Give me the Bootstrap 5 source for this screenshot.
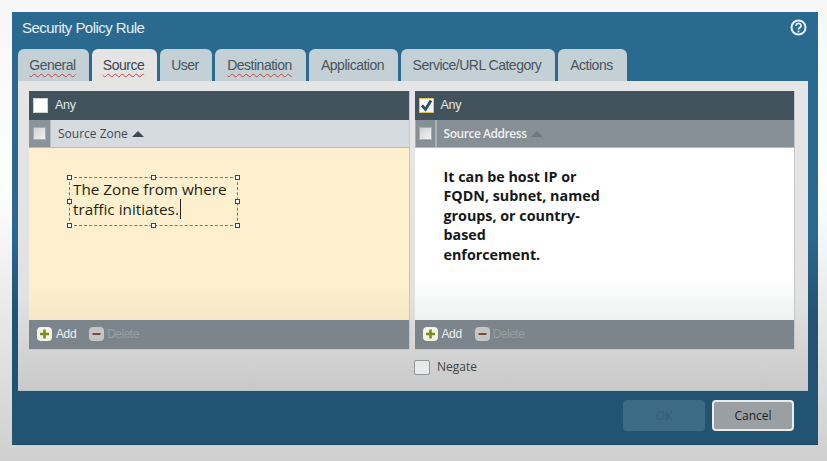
<!DOCTYPE html>
<html lang="en">
<head>
    <meta charset="UTF-8">
    <meta name="viewport" content="width=device-width, initial-scale=1.0">
    <title>Security Policy Rule</title>
    <link rel="stylesheet" href="https://cdn.jsdelivr.net/npm/bootstrap@5.3.0/dist/css/bootstrap.min.css">
    <style>
        html, body { height: 461px; overflow: hidden; }
        body { background: linear-gradient(#f6f6f6, #fff 40%, #cfcfcf 100%); padding: 12px 9px 16px 12px; font-family: "Liberation Sans", sans-serif; }
        .rule-dialog { height: 433px; background: linear-gradient(#2b6a90, #2a6a8f 50%, #235372 70%, #235372); padding: 0 10px 0 6px; border-bottom: 1px solid #1c4a66; }
        .rule-title { height: 37px; color: #e6eff4; font-size: 15px; letter-spacing: -.55px; padding: 0 0 4px 4px; }
        .help-icon { margin-right: 1px; margin-top: -3px; }
        .rule-tabs { height: 32px; gap: 3px; padding-left: 0; }
        .rule-tab { background: #c3d1d6; color: #4a5358; font-size: 14px; letter-spacing: -.5px; border-radius: 6px 6px 0 0; height: 32px; line-height: 32px; text-align: center; padding-right: 2px; }
        .rule-tab.active-tab { background: #e4e4e4; color: #3d464c; }
        .squiggle { text-decoration: underline wavy #c8453f 1px; text-underline-offset: 3px; }
        .rule-body { height: 310px; background: linear-gradient(#e5e5e5, #e2e2e2 70%, #c9c9c9); padding: 10px 13px 0 11px; border-bottom: 1px solid #b9c3c8; }
        .rule-cols { gap: 5px; }
        .rule-col { width: 380.5px; border: 1px solid #c4c8ca; border-width: 0 1px 1px 0; }
        .any-bar { height: 29px; background: #42525c; color: #e4e8ea; font-size: 12.5px; letter-spacing: -.3px; padding-left: 4px; gap: 7px; }
        .any-box { width: 15px; height: 15px; background: #fff; border: 1px solid #cdd2d5; }
        .any-box.checked { border-color: #e5bf5a; border-width: 1.5px; background: #f4f6f8; }
        .head-bar { height: 28px; border-bottom: 1px solid #b5bcc0; font-family: "Open Sans", sans-serif; font-size: 12px; }
        .head-bar.pale { background: #d6dbdf; color: #3e4a52; }
        .head-bar.dim { background: #858f95; color: #eef1f2; font-weight: 600; letter-spacing: -.45px; }
        .head-check { width: 22px; height: 100%; background: #8b9499; border-right: 1px solid #b5bcc0; margin-right: 7px; }
        .head-bar.dim .head-check { width: 22px; background: #858f95; border-left: 1px solid #a9b1b5; border-right: 2px solid #a9b1b5; }
        .head-box { width: 13px; height: 13px; background: linear-gradient(135deg, #cfd2d4, #f2f2f2); border: 1px solid #a7adb1; }
        .sort-up { width: 0; height: 0; border: 6px solid transparent; border-top: 0; border-bottom: 6px solid #3e4a52; margin-left: 4px; }
        .head-bar.dim .sort-up { border-bottom-color: #6e787e; }
        .list-pane { height: 172px; position: relative; }
        .list-pane.yellow { background: linear-gradient(#fef0cf, #fef0cf 80%, #f6e8c5); }
        .list-pane.white { background: linear-gradient(#fff, #fff 75%, #eff1f1); padding: 18.5px 0 0 29px; }
        .address-note { width: 170px; font-family: "Open Sans", sans-serif; font-weight: 700; font-size: 14.3px; line-height: 19.6px; color: #16181a; }
        .zone-note { position: absolute; left: 40px; top: 29px; width: 169px; height: 49px; border: 1px dashed #3c8aa6; font-family: "Open Sans", sans-serif; font-size: 15.3px; line-height: 20px; color: #241f14; padding: 1px 0 0 3px; white-space: nowrap; }
        .zone-note .caret-bar { border-right: 1.5px solid #222; padding-right: 1px; }
        .grip { position: absolute; width: 5px; height: 5px; background: #fff; border: 1px solid #444; }
        .foot-bar { height: 29px; background: #7b858b; padding: 0 0 1px 8px; font-size: 12px; letter-spacing: -.4px; color: #eef1f2; }
        .foot-btn { width: 15px; height: 14px; border-radius: 4px; margin-right: 4px; }
        .foot-btn.add { background: #f2f4e6; }
        .foot-btn.del { background: #c4c6c6; margin-left: 13px; margin-right: 3px; }
        .foot-off { color: #959da2; letter-spacing: -.5px; }
        .negate-row { margin: 8px 0 0 385px; font-family: "Open Sans", sans-serif; font-size: 12px; color: #40454a; gap: 7px; }
        .negate-box { width: 16px; height: 15px; background: #e9e9e9; border: 1px solid #8f979c; border-radius: 2px; }
        .rule-actions { height: 55px; padding: 9px 14px 0 0; gap: 7px; }
        .rule-btn { width: 82px; height: 31px; border-radius: 4px; font-family: "Open Sans", sans-serif; font-size: 12px; padding: 0; }
        .rule-btn.off { background: #4a7892; color: #3b6780; border: 0; }
        .rule-btn.on { background: #9a9fa4; color: #1c2024; border: 2px solid #e9ecec; }
    </style>
</head>
<body>
    <div class="rule-dialog">
        <div class="rule-title d-flex align-items-center justify-content-between">
            <span>Security Policy Rule</span>
            <svg class="help-icon" width="17" height="17" viewBox="0 0 17 17">
                <circle cx="8.5" cy="8.5" r="7" fill="#2c6b94" stroke="#e8f1f6" stroke-width="2"/>
                <path d="M6 6.8a2.5 2.3 0 1 1 3.7 2c-.8.5-1.2.8-1.2 1.7" fill="none" stroke="#e8f1f6" stroke-width="1.7"/>
                <circle cx="8.5" cy="12.6" r="1" fill="#e8f1f6"/>
            </svg>
        </div>
        <div class="rule-tabs d-flex">
            <div class="rule-tab" style="width:71px"><span class="squiggle">General</span></div>
            <div class="rule-tab active-tab" style="width:65px"><span class="squiggle">Source</span></div>
            <div class="rule-tab" style="width:52px">User</div>
            <div class="rule-tab" style="width:91px"><span class="squiggle">Destination</span></div>
            <div class="rule-tab" style="width:89px">Application</div>
            <div class="rule-tab" style="width:154px">Service/URL Category</div>
            <div class="rule-tab" style="width:69px">Actions</div>
        </div>
        <div class="rule-body">
            <div class="rule-cols d-flex">
                <div class="rule-col">
                    <div class="any-bar d-flex align-items-center"><span class="any-box"></span>Any</div>
                    <div class="head-bar pale d-flex align-items-center">
                        <span class="head-check d-flex align-items-center justify-content-center"><span class="head-box"></span></span>
                        Source Zone<span class="sort-up"></span>
                    </div>
                    <div class="list-pane yellow">
                        <div class="zone-note">
                            The Zone from where<br><span class="caret-bar">traffic initiates.</span>
                            <span class="grip" style="left:-3px;top:-3px"></span>
                            <span class="grip" style="left:81px;top:-3px"></span>
                            <span class="grip" style="right:-3px;top:-3px"></span>
                            <span class="grip" style="left:-3px;top:21px"></span>
                            <span class="grip" style="right:-3px;top:21px"></span>
                            <span class="grip" style="left:-3px;bottom:-3px"></span>
                            <span class="grip" style="left:81px;bottom:-3px"></span>
                            <span class="grip" style="right:-3px;bottom:-3px"></span>
                        </div>
                    </div>
                    <div class="foot-bar d-flex align-items-center">
                        <svg class="foot-btn add" viewBox="0 0 15 14"><path d="M7.5 2.5v9M3 7h9" stroke="#7c8a1e" stroke-width="2.6"/></svg>Add
                        <svg class="foot-btn del" viewBox="0 0 15 14"><path d="M3.5 7h8" stroke="#7d4a3a" stroke-width="2.2"/></svg><span class="foot-off">Delete</span>
                    </div>
                </div>
                <div class="rule-col">
                    <div class="any-bar d-flex align-items-center">
                        <span class="any-box checked d-flex align-items-center justify-content-center">
                            <svg width="13" height="13" viewBox="0 0 13 13"><path d="M2 6.5l3.5 4L11 1.5" fill="none" stroke="#24506f" stroke-width="2.8"/></svg>
                        </span>Any
                    </div>
                    <div class="head-bar dim d-flex align-items-center">
                        <span class="head-check d-flex align-items-center justify-content-center"><span class="head-box"></span></span>
                        Source Address<span class="sort-up"></span>
                    </div>
                    <div class="list-pane white">
                        <div class="address-note">It can be host IP or FQDN, subnet, named groups, or country-<br>based<br>enforcement.</div>
                    </div>
                    <div class="foot-bar d-flex align-items-center">
                        <svg class="foot-btn add" viewBox="0 0 15 14"><path d="M7.5 2.5v9M3 7h9" stroke="#7c8a1e" stroke-width="2.6"/></svg>Add
                        <svg class="foot-btn del" viewBox="0 0 15 14"><path d="M3.5 7h8" stroke="#7d4a3a" stroke-width="2.2"/></svg><span class="foot-off">Delete</span>
                    </div>
                </div>
            </div>
            <div class="negate-row d-flex align-items-center"><span class="negate-box"></span>Negate</div>
        </div>
        <div class="rule-actions d-flex justify-content-end">
            <button class="btn rule-btn off" type="button" disabled>OK</button>
            <button class="btn rule-btn on" type="button">Cancel</button>
        </div>
    </div>
    <script src="https://cdn.jsdelivr.net/npm/bootstrap@5.3.0/dist/js/bootstrap.bundle.min.js"></script>
</body>
</html>
